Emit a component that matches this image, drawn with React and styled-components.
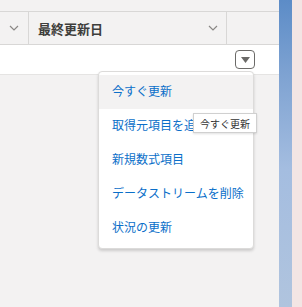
import styled, { createGlobalStyle } from 'styled-components';

const GlobalStyle = createGlobalStyle`
  html, body {
    margin: 0;
    padding: 0;
  }
  body {
    font-family: "Noto Sans CJK JP", "Noto Sans", sans-serif;
    background: #f3f2f2;
  }
`;

const Screen = styled.div`
  display: flex;
  width: 302px;
  height: 307px;
  overflow: hidden;
`;

const Main = styled.div`
  position: relative;
  width: 279px;
  background: #f3f2f2;
  padding-top: 11px;
`;

const SideStrip = styled.div`
  width: 13px;
  background: linear-gradient(180deg, #5c8cc7 0%, #7fa3d2 25%, #a4bde0 55%, #b0c4de 100%);
`;

const Edge = styled.div`
  width: 10px;
  background: #f3e5e4;
`;

const HeaderRow = styled.div`
  display: grid;
  grid-template-columns: 28px 198px 1fr;
  height: 32px;
  border-top: 1px solid #d8d7d6;
  border-bottom: 1px solid #d8d7d6;
  background: #f3f2f2;
`;

const HeaderCell = styled.div`
  display: flex;
  align-items: center;
  justify-content: ${(p) => (p.$center ? 'center' : 'space-between')};
  padding: ${(p) => (p.$center ? '0' : '0 8px 0 9px')};
  border-left: ${(p) => (p.$first ? 'none' : '1px solid #d8d7d6')};
  font-size: 13px;
  font-weight: bold;
  color: #3e3e3c;
`;

const Chevron = () => (
  <svg width="10" height="6" viewBox="0 0 10 6">
    <path d="M1 1 L5 5 L9 1" fill="none" stroke="#8a8886" strokeWidth="1.2" />
  </svg>
);

const DataRow = styled.div`
  display: flex;
  justify-content: flex-end;
  align-items: center;
  height: 29px;
  background: #fff;
  border-bottom: 1px solid #e5e4e3;
  padding-right: 24px;
`;

const MenuButton = styled.button`
  display: flex;
  align-items: center;
  justify-content: center;
  width: 20px;
  height: 19px;
  padding: 0;
  background: #fff;
  border: 1px solid #6b6a68;
  border-radius: 4px;
`;

const Menu = styled.ul`
  position: absolute;
  left: 98px;
  top: 71px;
  width: 156px;
  margin: 0;
  padding: 3px 0;
  list-style: none;
  background: #fff;
  border: 1px solid #dcdbda;
  border-radius: 4px;
  box-shadow: 0 2px 3px rgba(0, 0, 0, 0.16);
  box-sizing: border-box;
`;

const MenuItem = styled.li`
  height: 34px;
  display: flex;
  align-items: center;
  padding: 0 0 3px 13px;
  box-sizing: border-box;
  font-size: 12px;
  color: #0b6fc9;
  white-space: nowrap;
  overflow: hidden;
  background: ${(p) => (p.$hover ? '#f3f2f2' : '#fff')};
`;

const Tooltip = styled.div`
  position: absolute;
  left: 193px;
  top: 113px;
  height: 20px;
  padding: 0 6px;
  display: flex;
  align-items: center;
  background: #fff;
  border: 1px solid #d0d0d0;
  box-shadow: 0 1px 2px rgba(0, 0, 0, 0.12);
  font-size: 10px;
  color: #333;
  box-sizing: border-box;
`;

const items = ['今すぐ更新', '取得元項目を追加', '新規数式項目', 'データストリームを削除', '状況の更新'];

export default function App() {
  return (
    <Screen>
      <GlobalStyle />
      <Main>
        <HeaderRow>
          <HeaderCell $first $center>
            <Chevron />
          </HeaderCell>
          <HeaderCell>
            <span>最終更新日</span>
            <Chevron />
          </HeaderCell>
          <HeaderCell />
        </HeaderRow>
        <DataRow>
          <MenuButton>
            <svg width="9" height="6" viewBox="0 0 9 6">
              <path d="M0 0 H9 L4.5 6 Z" fill="#6b6a68" />
            </svg>
          </MenuButton>
        </DataRow>
        <Menu>
          {items.map((label, i) => (
            <MenuItem key={label} $hover={i === 0}>
              {label}
            </MenuItem>
          ))}
        </Menu>
        <Tooltip>今すぐ更新</Tooltip>
      </Main>
      <SideStrip />
      <Edge />
    </Screen>
  );
}
